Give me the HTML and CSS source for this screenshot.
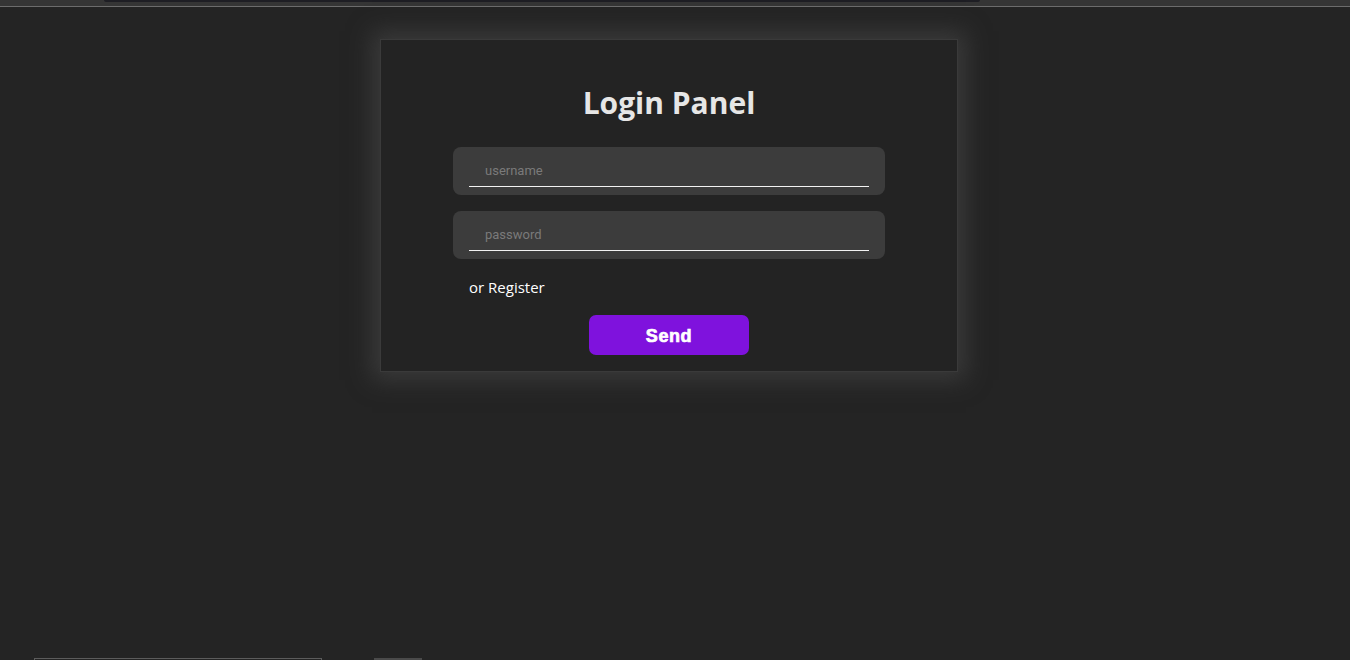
FILE: index.html
```html
<!DOCTYPE html>
<html lang="en">
<head>
<meta charset="utf-8">
<title>Login Panel</title>
<link rel="stylesheet" href="styles.css">
</head>
<body>
<div class="topbar"><div class="topbar-pill"></div></div>
<main class="main">
  <form class="card">
    <h1 class="title">Login Panel</h1>
    <div class="field"><input class="input" type="text" placeholder="username"></div>
    <div class="field"><input class="input" type="password" placeholder="password"></div>
    <a class="register">or Register</a>
    <button class="send" type="button">Send</button>
  </form>
</main>
<div class="bottombar"><div class="bb-box"></div><div class="bb-block"></div></div>
</body>
</html>
```
FILE: styles.css
```css
html, body { margin: 0; padding: 0; height: 100%; }
body {
  background: #242424;
  font-family: "Open Sans", "Noto Sans", sans-serif;
  display: flex;
  flex-direction: column;
  overflow: hidden;
}
.topbar {
  height: 6px;
  background: #353535;
  border-bottom: 1px solid #6c6c6c;
  padding-left: 104px;
  flex-shrink: 0;
}
.topbar-pill {
  width: 876px;
  height: 2px;
  background: #1e1e24;
  border-radius: 0 0 4px 4px;
}
.main {
  flex: 1;
  display: flex;
  flex-direction: column;
  align-items: center;
  padding-right: 12px;
  padding-top: 32px;
}
.card {
  box-sizing: border-box;
  width: 578px;
  height: 333px;
  background: #232323;
  border: 1px solid #3a3a3a;
  box-shadow: 0 0 22px 8px rgba(66, 66, 66, 0.75);
  display: flex;
  flex-direction: column;
  align-items: center;
  padding-top: 45px;
}
.title {
  margin: 0 0 26px;
  font-size: 30px;
  line-height: 36px;
  font-weight: 700;
  color: #e6e6e6;
  font-family: "Open Sans", "Noto Sans", sans-serif;
}
.field {
  box-sizing: border-box;
  width: 432px;
  height: 48px;
  background: #3c3c3c;
  border-radius: 8px;
  padding: 8px 16px 0;
  margin-bottom: 16px;
}
.input {
  box-sizing: border-box;
  display: block;
  width: 100%;
  height: 32px;
  background: transparent;
  border: none;
  border-bottom: 1px solid #f2f2f2;
  outline: none;
  padding: 0 16px;
  font-family: Roboto, sans-serif;
  font-size: 13px;
  color: #ddd;
}
.input::placeholder { color: #7a7a7a; }
.register {
  align-self: flex-start;
  margin-left: 88px;
  margin-top: 2px;
  font-size: 15px;
  line-height: 20px;
  color: #ffffff;
  font-family: "Open Sans", "Noto Sans", sans-serif;
}
.send {
  margin-top: 18px;
  width: 160px;
  height: 40px;
  border: none;
  border-radius: 7px;
  background: #7f12dd;
  color: #fff;
  padding: 3px 0 0;
  font-family: "Liberation Sans", Arial, sans-serif;
  font-weight: 900;
  font-size: 18px;
  -webkit-text-stroke: 0.7px #fff;
  letter-spacing: 0.6px;
}
.bottombar {
  height: 2px;
  display: flex;
  flex-shrink: 0;
  padding-left: 34px;
  gap: 52px;
}
.bb-box {
  width: 288px;
  height: 2px;
  border-top: 1px solid #5c5c5c;
  border-left: 1px solid #5c5c5c;
  border-right: 1px solid #5c5c5c;
  box-sizing: border-box;
}
.bb-block {
  width: 48px;
  height: 2px;
  background: #4a4a4a;
}
```
